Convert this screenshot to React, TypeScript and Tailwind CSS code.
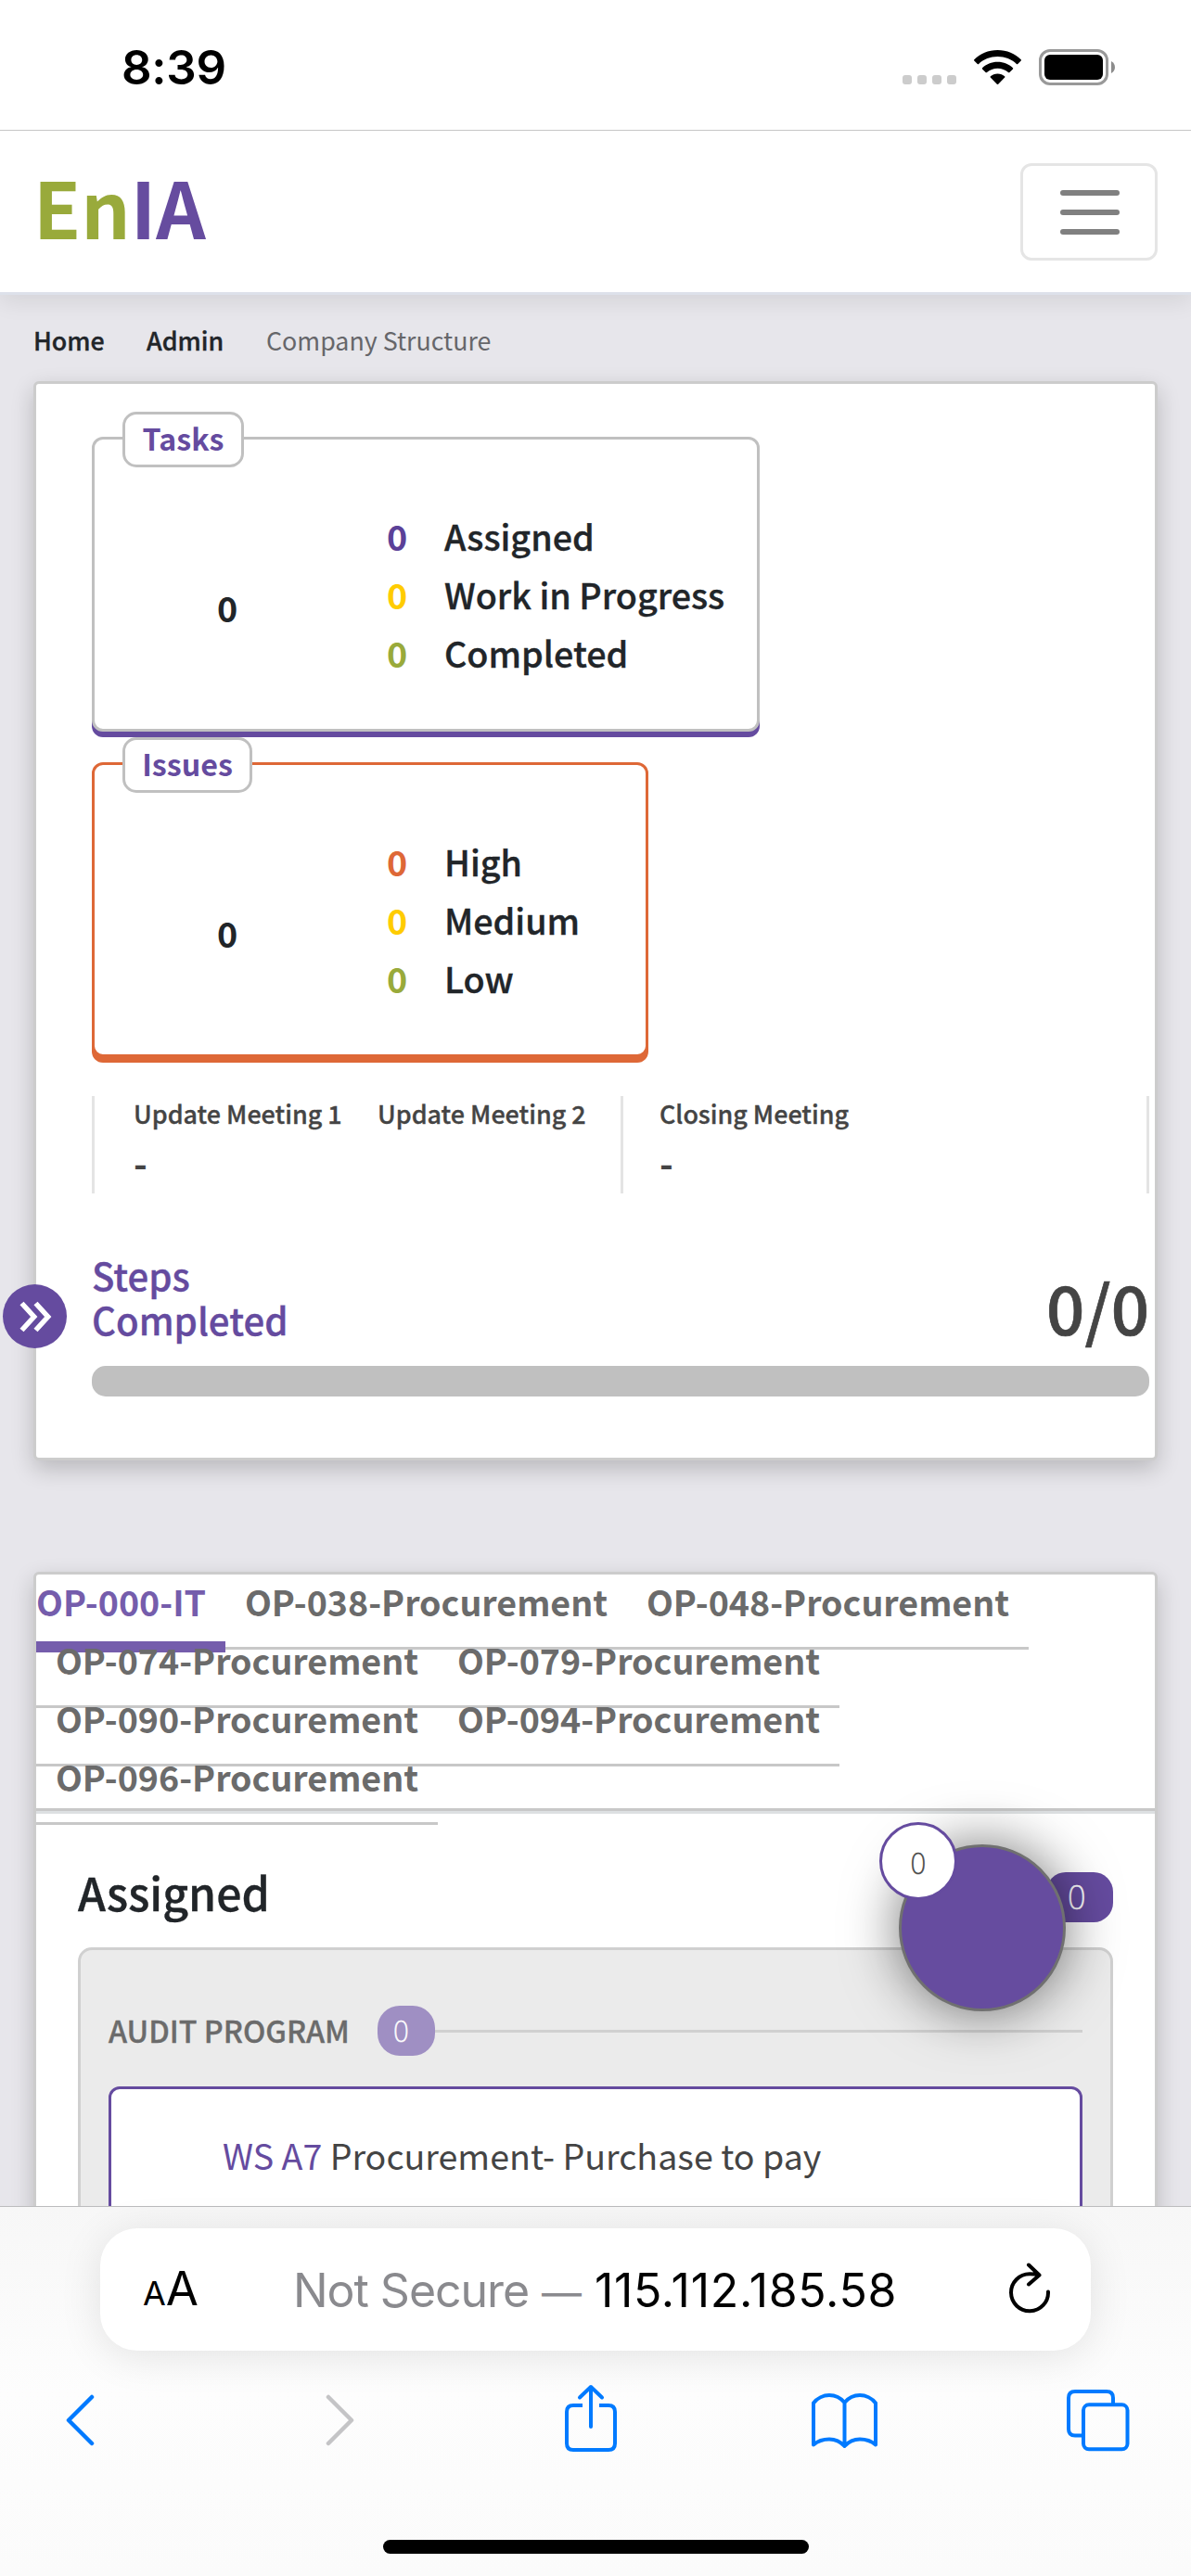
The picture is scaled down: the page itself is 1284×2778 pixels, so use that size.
import React from "react";

const CJK = "font-['Noto_Sans_CJK_SC',sans-serif]";
const SEMI = "font-medium [-webkit-text-stroke:0.35px_currentColor]";

type Row = { n: string; label: string; color: string };

function StatBox({ title, rows, box, legend }: { title: string; rows: Row[]; box: string; legend: string }) {
  return (
    <div className={`relative h-[318px] rounded-[12px] border-[3px] bg-white ${box}`}>
      <div className={`absolute -top-[30px] left-[30px] h-[60px] rounded-[15px] border-[3px] border-[#c0c0c0] bg-white text-center text-[32.2px] leading-[51px] font-bold text-[#654b9f] ${legend}`}>
        {title}
      </div>
      <div className="flex h-full text-[37.7px] text-[#212529]">
        <div className="w-[286px] pt-[149px] pl-[132px] leading-[63px] font-bold">0</div>
        <div className="pt-[72px] pl-[29px]">
          {rows.map((r) => (
            <div key={r.label} className="flex h-[63px] leading-[63px]">
              <span className={`w-[62px] font-bold ${r.color}`}>{r.n}</span>
              <span className={`whitespace-nowrap ${SEMI}`}>{r.label}</span>
            </div>
          ))}
        </div>
      </div>
    </div>
  );
}

const tabs = ["OP-038-Procurement", "OP-048-Procurement", "OP-074-Procurement", "OP-079-Procurement", "OP-090-Procurement", "OP-094-Procurement", "OP-096-Procurement"];

function StatusBar() {
  return (
    <div className="flex h-[141px] shrink-0 items-start justify-between border-b border-[#c6c6c6] bg-white pt-[42px] pr-[82px] pl-[131px] font-['Inter',sans-serif]">
      <div className="text-[51px] leading-[62px] font-semibold tracking-[-0.3px] text-black">8:39</div>
      <div className="flex h-[62px] items-start pt-[11px]">
        <div className="mt-[28px] mr-[19px] flex gap-[6px]">
          {[0, 1, 2, 3].map((i) => (
            <div key={i} className="size-[10px] rounded-[3px] bg-[#ccc]" />
          ))}
        </div>
        <svg className="mt-[1px] mr-[19px] h-[38px] w-[51px]" viewBox="0 0 51 38">
          <path d="M25.500 0C35.500 0 44.500 4 50.700 10.200Q51.300 10.900 50.700 11.500L47.200 15Q46.600 15.500 45.900 15C40.500 9.900 33.500 7.100 25.500 7.100S10.500 9.900 5.100 15Q4.400 15.500 3.800 15L.3 11.500Q-.3 10.900.3 10.200C6.500 4 15.500 0 25.500 0Z" />
          <path d="M25.500 12.700C32 12.700 37.800 15.200 42 19.200Q42.500 19.900 42 20.500L38.400 24Q37.700 24.600 37 24C34 21.400 30 19.800 25.500 19.800S17 21.400 14 24Q13.300 24.600 12.600 24L9 20.500Q8.500 19.900 9 19.200C13.200 15.200 19 12.700 25.500 12.700Z" />
          <path d="M25.500 25.500C28.600 25.500 31.200 26.600 33.200 28.300Q33.700 29 33.200 29.600L26.200 36.800Q25.500 37.300 24.800 36.800L17.800 29.600Q17.300 29 17.800 28.300C19.800 26.600 22.400 25.500 25.500 25.500Z" />
        </svg>
        <div className="h-[39px] w-[75px] rounded-[12px] border-[3px] border-[#999] p-[3px]">
          <div className="h-full w-full rounded-[6px] bg-black" />
        </div>
        <svg className="mt-[13px] ml-[3px] h-[13px] w-[4px]" viewBox="0 0 4 13">
          <path d="M0 0C5.300 2.500 5.300 10.500 0 13Z" fill="#8c8c8c" />
        </svg>
      </div>
    </div>
  );
}

function NavBar() {
  return (
    <div className="relative z-10 flex h-[177px] shrink-0 items-start justify-between border-b-[3px] border-[#dde1ea] bg-white pr-[36px] pl-[36px] shadow-[0_6px_24px_rgba(0,0,0,0.09)]">
      <div className="pt-[21px] text-[83.4px] leading-[120px] font-bold text-[#99aa3b]">
        En<span className="text-[#664c9f]">IA</span>
      </div>
      <div className="mt-[35px] flex h-[105px] w-[148px] flex-col items-center justify-center gap-[15px] rounded-[12px] border-[3px] border-[#e5e5e5] pl-[2px]">
        <div className="h-[6px] w-[64px] rounded-full bg-[#808080]" />
        <div className="h-[6px] w-[64px] rounded-full bg-[#808080]" />
        <div className="h-[6px] w-[64px] rounded-full bg-[#808080]" />
      </div>
    </div>
  );
}

const cardClass = "rounded-[6px] border-[3px] border-[#ccc] bg-white shadow-[0_9px_24px_rgba(0,0,0,0.2)]";

function SummaryCard() {
  return (
    <div className={`relative mx-[36px] h-[1164px] shrink-0 ${cardClass}`}>
      <div className="flex h-full flex-col pt-[57px] pr-[6px] pl-[60px]">
        <StatBox
          title="Tasks"
          box="w-[720px] border-[#c0c0c0] shadow-[0_6px_0_#654b9f]"
          legend="w-[131px]"
          rows={[
            { n: "0", label: "Assigned", color: "text-[#5b4198]" },
            { n: "0", label: "Work in Progress", color: "text-[#ffcc00]" },
            { n: "0", label: "Completed", color: "text-[#99aa3b]" },
          ]}
        />
        <div className="h-[33px]" />
        <StatBox
          title="Issues"
          box="w-[600px] border-[#de6837] shadow-[0_6px_0_#de6837]"
          legend="w-[140px]"
          rows={[
            { n: "0", label: "High", color: "text-[#de6837]" },
            { n: "0", label: "Medium", color: "text-[#ffcc00]" },
            { n: "0", label: "Low", color: "text-[#99aa3b]" },
          ]}
        />
        <div className="mt-[42px] flex h-[105px] border-x-[3px] border-[#e4e4e4] text-[26.9px] text-[#444]">
          <div className="w-[570px] border-r-[3px] border-[#e4e4e4] pl-[42px]">
            <div className={`-mt-[1px] flex leading-[40px] whitespace-nowrap ${SEMI}`}>
              <span className="w-[263px]">Update Meeting 1</span>
              <span>Update Meeting 2</span>
            </div>
            <div className="mt-[10px] text-[40px] leading-[44px] font-bold">-</div>
          </div>
          <div className="pl-[39px]">
            <div className={`-mt-[1px] leading-[40px] whitespace-nowrap ${SEMI}`}>Closing Meeting</div>
            <div className="mt-[10px] text-[40px] leading-[44px] font-bold">-</div>
          </div>
        </div>
        <div className="mt-[64px] flex h-[122px] justify-between">
          <div className={`w-[240px] text-[40.2px] leading-[48px] text-[#654b9f] ${SEMI}`}>
            Steps Completed
          </div>
          <div className="pt-[13px] text-[72.5px] leading-[90px] font-medium text-[#444] [-webkit-text-stroke:0.7px_currentColor]">0/0</div>
        </div>
        <div className="h-[33px] rounded-[15px] bg-[#c0c0c0]" />
      </div>
      <div className="absolute top-[971px] -left-[36px] flex size-[69px] items-center justify-center rounded-full bg-[#654b9f]">
        <svg className="h-[34px] w-[36px]" viewBox="0 0 36 34" fill="none" stroke="#fff" strokeWidth="5.500">
          <path d="M3.500 2.500L16.700 17L3.500 31.500M18.500 2.500L31.700 17L18.500 31.500" />
        </svg>
      </div>
    </div>
  );
}

function BoardCard() {
  return (
    <div className={`relative mx-[36px] mt-[120px] h-[800px] shrink-0 ${cardClass}`}>
      <div className="flex h-[255px] flex-wrap content-start border-b-[3px] border-[#c8c8c8] text-[37.6px] leading-[57px] font-bold text-[#6b6b6b]">
        <div className="-mb-[21px] h-[84px] w-[204px] border-b-[12px] border-[#755dac] text-[#755dac]">OP-000-IT</div>
        {tabs.map((t) => (
          <div key={t} className="relative -mb-[18px] h-[81px] w-[433px] border-b-[3px] border-[#c8c8c8] text-center whitespace-nowrap">
            {t}
          </div>
        ))}
      </div>
      <div className="h-[3px] bg-[#dde0e2]" />
      <div className="flex flex-col px-[45px] pt-[60px]">
        <div className="flex h-[60px] items-start justify-between">
          <div className={`-mt-[6px] text-[48.2px] leading-[60px] text-[#212529] ${SEMI}`}>Assigned</div>
          <div className="mt-[3px] h-[54px] w-[72px] rounded-[21px] bg-[#654b9f] pl-[23px] text-[37.6px] leading-[47px] font-thin text-white [-webkit-text-stroke:0.5px_currentColor]">0</div>
        </div>
        <div className="mt-[24px] flex h-[400px] flex-col rounded-[15px] border-[3px] border-[#d0d0d0] bg-[#ebebeb] px-[30px] pt-[60px]">
          <div className="flex h-[54px] items-center">
            <div className={`-mt-[3px] w-[290px] text-[32.3px] leading-[46px] whitespace-nowrap text-[#6b6b6b] ${SEMI}`}>AUDIT PROGRAM</div>
            <div className="h-[54px] w-[62px] rounded-[24px] bg-[#9f8fc3] pl-[17px] text-[32.2px] leading-[50px] font-thin text-white [-webkit-text-stroke:0.5px_currentColor]">0</div>
            <div className="h-[3px] flex-1 bg-[#d0d0d0]" />
          </div>
          <div className="mt-[33px] h-[250px] rounded-[12px] border-[3px] border-[#654b9f] bg-white pt-[41px] pl-[120px] text-[37.6px] leading-[60px] whitespace-nowrap text-[#444]">
            <span className="text-[#654b9f]">WS A7</span> Procurement- Purchase to pay
          </div>
        </div>
      </div>
      <div className="absolute top-[291px] left-[930px] size-[180px] rounded-full border-[3px] border-[#707070] bg-[#664c9f] shadow-[0_0_60px_rgba(0,0,0,0.55)]">
        <div className="absolute -top-[27px] -left-[24px] size-[84px] rounded-full border-[3px] border-[#654b9f] bg-white text-center text-[32.2px] leading-[78px] font-thin text-[#444] [-webkit-text-stroke:0.5px_currentColor]">0</div>
      </div>
    </div>
  );
}

function BrowserBar() {
  return (
    <div className="relative z-20 flex h-[399px] shrink-0 flex-col items-center border-t border-[#bcbcbe] bg-[#fafafa] bg-linear-to-b from-[#f7f7f7] via-[#fdfdfd] to-[#fbfbfb] pt-[23px] font-['Inter',sans-serif]">
      <div className="flex h-[132px] w-[1068px] items-center rounded-[40px] bg-white shadow-[0_6px_45px_rgba(0,0,0,0.1)]">
        <div className="ml-[46px] flex w-[162px] items-baseline pt-[3px] text-black">
          <span className="text-[36px] leading-[60px]">A</span>
          <span className="text-[51px] leading-[60px]">A</span>
        </div>
        <div className="flex w-[772px] items-baseline pt-[3px] text-[50px] leading-[60px] whitespace-pre text-black">
          <span className="w-[268px] tracking-[-1.05px] text-[#8a8a8e]">Not Secure </span>
          <span className="w-[57px] text-[43px] text-[#8a8a8e]">—</span>
          <span className="tracking-[0.7px]">115.112.185.58</span>
        </div>
        <svg className="-mt-[2px] h-[56px] w-[46px]" viewBox="0 0 46 56" fill="none" stroke="#000" strokeWidth="4" strokeLinecap="round" strokeLinejoin="round">
          <path d="M42 31.500A20 20 0 1 1 22 12.300Q28 12.300 32.500 13.500M21 2.500L32.500 13.500L21 23.500" />
        </svg>
      </div>
      <div className="mt-[36px] flex h-[73px] w-full items-start pl-[70px]">
        <svg className="mt-[11px] h-[56px] w-[32px]" viewBox="0 0 32 56" fill="none" stroke="#007aff" strokeWidth="4.500" strokeLinecap="round" strokeLinejoin="round">
          <path d="M29 3L4 28L29 53" />
        </svg>
        <svg className="mt-[11px] ml-[249px] h-[56px] w-[32px]" viewBox="0 0 32 56" fill="none" stroke="#c4c4c6" strokeWidth="4.500" strokeLinecap="round" strokeLinejoin="round">
          <path d="M3 3L28 28L3 53" />
        </svg>
        <svg className="ml-[226px] h-[73px] w-[56px]" viewBox="0 0 56 73" fill="none" stroke="#007aff" strokeWidth="4" strokeLinecap="round" strokeLinejoin="round">
          <path strokeLinecap="butt" d="M19 23H9Q2 23 2 30V64Q2 71 9 71H47Q54 71 54 64V30Q54 23 47 23H37" />
          <path d="M28 46V3M16 14.500L28 3L40 14.500" />
        </svg>
        <svg className="mt-[9px] ml-[210px] h-[60px] w-[71px]" viewBox="0 0 71 60" fill="none" stroke="#007aff" strokeWidth="4" strokeLinecap="round" strokeLinejoin="round">
          <path d="M35.500 11C31 5.500 25 3 19 3S6 6 2 11.500V56.500C6 53 13 50.500 19 50.500S31 53 35.500 58C40 53 46 50.500 52 50.500S65 53 69 56.500V11.500C65 6 58 3 52 3S40 5.500 35.500 11V58" />
        </svg>
        <svg className="mt-[5px] ml-[204px] h-[68px] w-[68px]" viewBox="0 0 68 68" fill="none" stroke="#007aff" strokeWidth="4">
          <path d="M18 50.500H9Q2 50.500 2 43.500V10Q2 3 9 3H43Q50 3 50 10V17" />
          <rect x="18" y="17.300" width="47.500" height="48" rx="6" />
        </svg>
      </div>
      <div className="mt-[95px] h-[15px] w-[459px] rounded-full bg-black" />
    </div>
  );
}

export default function App() {
  return (
    <div className={`flex h-[2778px] w-[1284px] flex-col overflow-hidden bg-[#e7e6eb] ${CJK}`}>
      <StatusBar />
      <div className="flex h-[2238px] shrink-0 flex-col overflow-hidden">
        <NavBar />
        <div className="flex h-[93px] shrink-0 items-start pt-[29px] pl-[36px] text-[26.8px] leading-[40px] whitespace-nowrap text-[#212529]">
          <span className={`w-[122px] ${SEMI}`}>Home</span>
          <span className={`w-[129px] ${SEMI}`}>Admin</span>
          <span className="text-[#66666a]">Company Structure</span>
        </div>
        <SummaryCard />
        <BoardCard />
      </div>
      <BrowserBar />
    </div>
  );
}
